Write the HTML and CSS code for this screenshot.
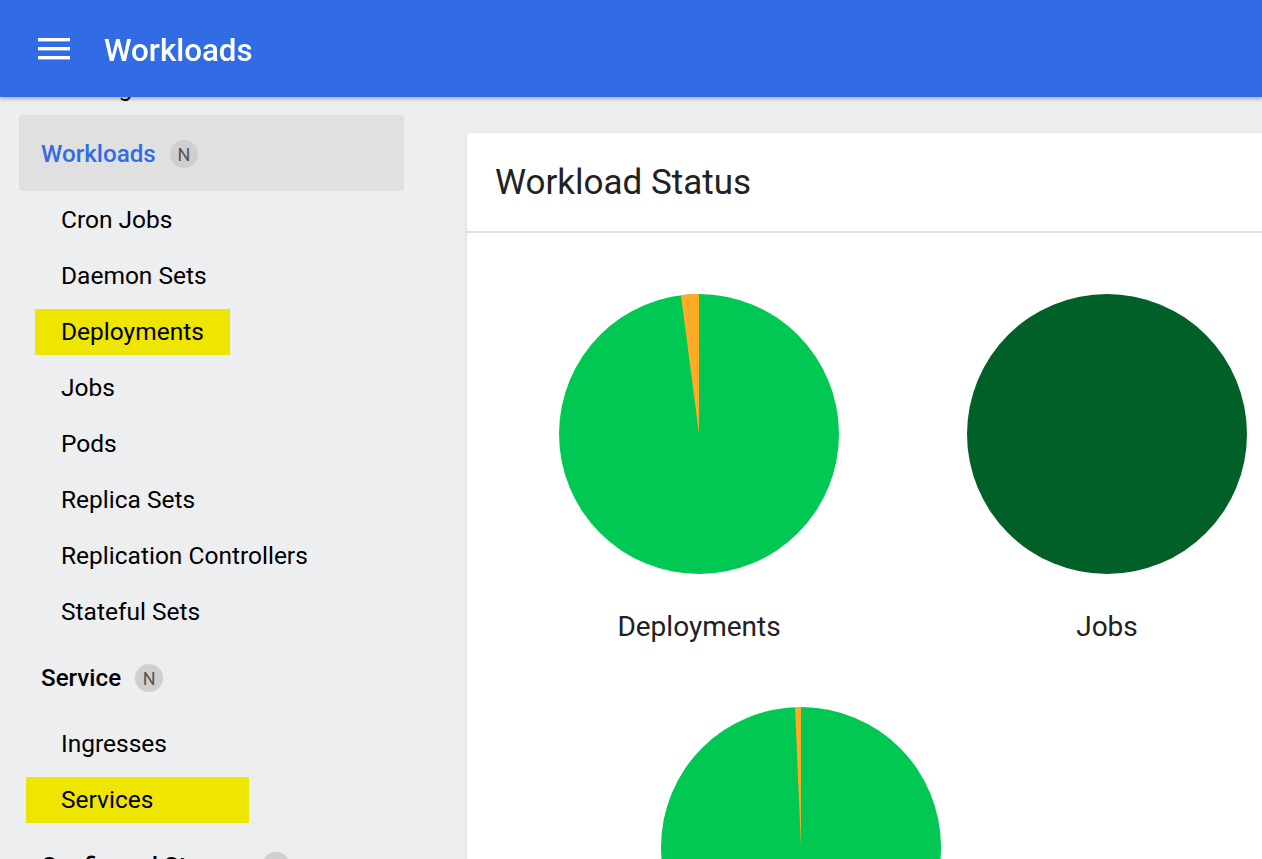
FILE: index.html
```html
<!DOCTYPE html>
<html lang="en">
<head>
<meta charset="utf-8">
<title>Workloads</title>
<link rel="stylesheet" href="styles.css">
</head>
<body>
<header class="topbar">
  <button class="menu-btn" aria-label="Menu">
    <svg width="32" height="22" viewBox="0 0 32 22"><rect x="0" y="0" width="32" height="3.4" fill="#fff"/><rect x="0" y="9" width="32" height="3.4" fill="#fff"/><rect x="0" y="18" width="32" height="3.4" fill="#fff"/></svg>
  </button>
  <h1 class="topbar-title">Workloads</h1>
</header>
<div class="layout">
  <nav class="sidebar">
    <div class="nav-sub hidden-top"><span class="nav-text">Storage Classes</span></div>
    <div class="nav-group active"><span class="group-text">Workloads</span><span class="badge">N</span></div>
    <div class="nav-sub"><span class="nav-text">Cron Jobs</span></div>
    <div class="nav-sub"><span class="nav-text">Daemon Sets</span></div>
    <div class="nav-sub"><span class="nav-text hl hl-deploy">Deployments</span></div>
    <div class="nav-sub"><span class="nav-text">Jobs</span></div>
    <div class="nav-sub"><span class="nav-text">Pods</span></div>
    <div class="nav-sub"><span class="nav-text">Replica Sets</span></div>
    <div class="nav-sub"><span class="nav-text">Replication Controllers</span></div>
    <div class="nav-sub"><span class="nav-text">Stateful Sets</span></div>
    <div class="nav-group"><span class="group-text">Service</span><span class="badge">N</span></div>
    <div class="nav-sub"><span class="nav-text">Ingresses</span></div>
    <div class="nav-sub"><span class="nav-text hl hl-svc">Services</span></div>
    <div class="nav-group"><span class="group-text">Config and Storage</span><span class="badge">N</span></div>
  </nav>
  <main class="main">
    <section class="card">
      <div class="card-header"><h2 class="card-title">Workload Status</h2></div>
      <div class="card-body">
        <div class="pie-row">
          <div class="pie-item">
            <svg class="pie" width="280" height="280" viewBox="0 0 280 280">
              <circle cx="140" cy="140" r="140" fill="#00c853"/>
              <path d="M140,140 L121.97,1.17 A140,140 0 0 1 140,0 Z" fill="#ffab26"/>
            </svg>
            <div class="pie-label">Deployments</div>
          </div>
          <div class="pie-item">
            <svg class="pie" width="280" height="280" viewBox="0 0 280 280">
              <circle cx="140" cy="140" r="140" fill="#006028"/>
            </svg>
            <div class="pie-label">Jobs</div>
          </div>
        </div>
        <div class="pie-row offset">
          <div class="pie-item">
            <svg class="pie" width="280" height="280" viewBox="0 0 280 280">
              <circle cx="140" cy="140" r="140" fill="#00c853"/>
              <path d="M140,140 L134.02,0.13 A140,140 0 0 1 140,0 Z" fill="#ffab26"/>
            </svg>
            <div class="pie-label">Pods</div>
          </div>
        </div>
      </div>
    </section>
  </main>
</div>
</body>
</html>
```
FILE: styles.css
```css
* { box-sizing: border-box; }
html, body {
  margin: 0;
  padding: 0;
  height: 100%;
  overflow: hidden;
  background: #edeef0;
  font-family: Roboto, "Liberation Sans", Arial, sans-serif;
}
.topbar {
  position: fixed;
  top: 0;
  left: 0;
  right: 0;
  height: 97px;
  background: #326ce5;
  display: flex;
  align-items: center;
  padding-left: 38px;
  box-shadow: 0 2px 4px rgba(0,0,0,0.3);
  z-index: 10;
}
.menu-btn {
  background: none;
  border: 0;
  padding: 0;
  margin: 0 34px 0 0;
  display: flex;
  width: 32px;
  height: 22px;
}
.topbar-title {
  margin: 3px 0 0 0;
  color: #fff;
  font-size: 31.3px;
  font-weight: 500;
  letter-spacing: 0;
}
.layout {
  display: flex;
  padding-top: 97px;
  height: 100%;
}
.sidebar {
  width: 440px;
  flex: none;
  margin-top: -38px;
  padding-left: 19px;
}
.nav-sub {
  height: 56px;
  display: flex;
  align-items: center;
  padding-left: 42px;
  padding-top: 1px;
  width: 385px;
}
.nav-text {
  font-size: 24.5px;
  color: #000;
}
.hl {
  background: #efe600;
  height: 46px;
  display: flex;
  align-items: center;
}
.hl-deploy { margin-left: -26px; padding-left: 26px; padding-right: 26px; }
.hl-svc { margin-left: -35px; padding-left: 35px; padding-right: 96px; }
.nav-group {
  height: 76px;
  width: 385px;
  display: flex;
  align-items: center;
  padding-left: 22px;
  padding-top: 2px;
  border-radius: 4px;
}
.nav-group.active { background: #e0e0e0; }
.group-text {
  font-size: 24.2px;
  font-weight: 500;
  color: #000;
}
.nav-group.active .group-text { color: #326ce5; }
.badge {
  width: 28px;
  height: 28px;
  border-radius: 50%;
  background: #cfcfcf;
  color: #555;
  font-size: 18px;
  display: flex;
  align-items: center;
  justify-content: center;
  margin-left: 14px;
}
.main {
  flex: 1;
  padding-top: 36px;
  padding-left: 27px;
  min-width: 0;
}
.card {
  background: #fff;
  border-radius: 4px 0 0 0;
  width: 1000px;
  box-shadow: 0 1px 3px rgba(0,0,0,0.15);
}
.card-header {
  height: 100px;
  display: flex;
  align-items: center;
  padding-left: 28px;
  border-bottom: 2px solid #e0e0e0;
}
.card-title {
  margin: 0;
  font-size: 35px;
  font-weight: 400;
  color: #212121;
}
.card-body {
  padding: 61px 0 0 28px;
}
.pie-row {
  display: flex;
}
.pie-row.offset {
  padding-left: 102px;
  margin-top: 64px;
}
.pie-item {
  width: 408px;
  display: flex;
  flex-direction: column;
  align-items: center;
}
.pie { display: block; }
.pie-label {
  margin-top: 37px;
  font-size: 28px;
  line-height: 32px;
  color: #212121;
}
```
